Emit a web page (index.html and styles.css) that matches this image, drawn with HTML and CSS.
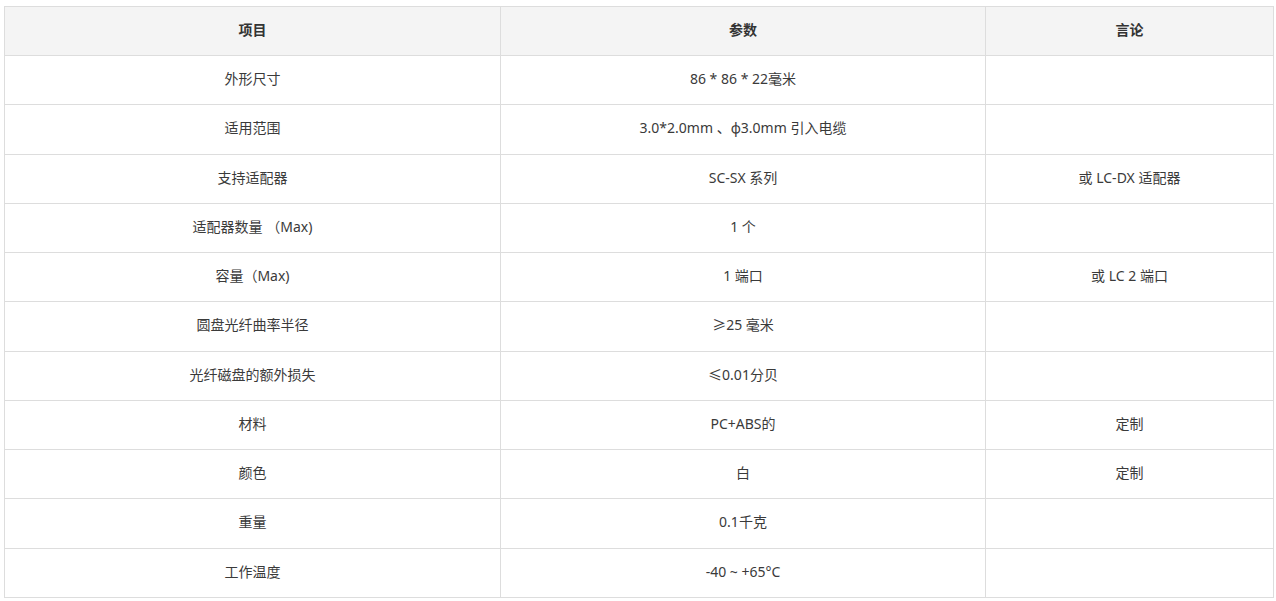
FILE: index.html
```html
<!DOCTYPE html>
<html lang="zh">
<head>
<meta charset="utf-8">
<link rel="stylesheet" href="styles.css">
</head>
<body>
<table class="spec">
  <colgroup>
    <col class="c1"><col class="c2"><col class="c3">
  </colgroup>
  <thead>
    <tr><th>项目</th><th>参数</th><th>言论</th></tr>
  </thead>
  <tbody>
    <tr><td>外形尺寸</td><td>86 * 86 * 22毫米</td><td></td></tr>
    <tr><td>适用范围</td><td>3.0*2.0mm 、φ3.0mm 引入电缆</td><td></td></tr>
    <tr><td>支持适配器</td><td>SC-SX 系列</td><td>或 LC-DX 适配器</td></tr>
    <tr><td>适配器数量 （Max)</td><td>1 个</td><td></td></tr>
    <tr><td>容量（Max)</td><td>1 端口</td><td>或 LC 2 端口</td></tr>
    <tr><td>圆盘光纤曲率半径</td><td>≥25 毫米</td><td></td></tr>
    <tr><td>光纤磁盘的额外损失</td><td>≤0.01分贝</td><td></td></tr>
    <tr><td>材料</td><td>PC+ABS的</td><td>定制</td></tr>
    <tr><td>颜色</td><td>白</td><td>定制</td></tr>
    <tr><td>重量</td><td>0.1千克</td><td></td></tr>
    <tr><td>工作温度</td><td>-40 ~ +65°C</td><td></td></tr>
  </tbody>
</table>
</body>
</html>
```

FILE: styles.css
```css
html, body {
  margin: 0;
  padding: 0;
  background: #ffffff;
}
body {
  padding: 6px 4px 0 4px;
  font-family: "Noto Sans", "Noto Sans CJK SC", sans-serif;
  font-size: 14px;
  color: #3a3a3a;
}
.spec {
  width: 1269px;
  border-collapse: collapse;
  table-layout: fixed;
}
.c1 { width: 496px; }
.c2 { width: 485px; }
.c3 { width: 288px; }
.spec th,
.spec td {
  border: 1px solid #dddddd;
  text-align: center;
  vertical-align: middle;
  height: 48.25px;
  padding: 0 8px 2px 8px;
  box-sizing: border-box;
  line-height: 18px;
}
.spec td {
  height: 49.25px;
}
.spec th {
  height: 49px;
  background: #f4f4f4;
  font-weight: bold;
  color: #333333;
}
```
